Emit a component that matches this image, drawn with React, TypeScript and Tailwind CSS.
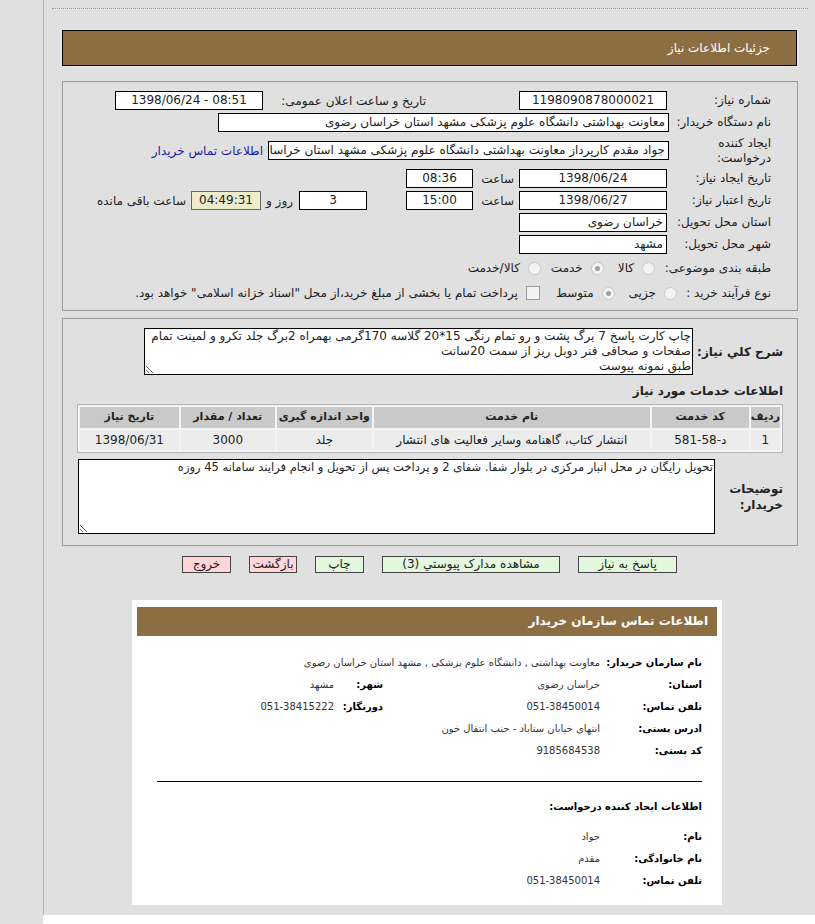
import React from 'react';

const Box: React.FC<{ className?: string; dir?: string; children?: React.ReactNode }> = ({ className = '', dir, children }) => (
  <div
    dir={dir}
    className={`h-[19px] shrink-0 border border-black bg-white px-[3px] text-[12px] leading-[17px] whitespace-nowrap overflow-hidden ${className}`}
  >
    {children}
  </div>
);

const Label: React.FC<{ children: React.ReactNode }> = ({ children }) => (
  <div className="w-[100px] shrink-0 whitespace-nowrap text-right text-[12px] leading-[15px] text-[#222]">{children}</div>
);

const Radio: React.FC<{ checked?: boolean }> = ({ checked }) => (
  <span className="inline-flex h-[13px] w-[13px] shrink-0 items-center justify-center rounded-full border border-[#c9c9c9] bg-[#f3f3f3]">
    {checked && <span className="h-[5px] w-[5px] rounded-full bg-[#a0a0a0]" />}
  </span>
);

const Btn: React.FC<{ className: string; children: React.ReactNode }> = ({ className, children }) => (
  <div className={`h-[17px] border border-[#444] text-center text-[12px] leading-[15px] text-[#222] ${className}`}>{children}</div>
);

const services = [
  { row: '1', code: 'د-58-581', name: 'انتشار کتاب، گاهنامه وسایر فعالیت های انتشار', unit: 'جلد', qty: '3000', date: '1398/06/31' },
];

export default function App() {
  return (
    <div dir="rtl" className="flex min-h-[924px] bg-white font-['DejaVu_Sans',sans-serif] text-[#222]">
      <div className="flex-1 flex flex-col">
        <div className="bg-[#e0e0e0] border-l border-[#b5b5b5] pb-[10px] pt-[8px]">
          {/* dotted rule */}
          <div className="mr-[7px] ml-[8px] border-t border-dotted border-[#9a9a9a]" />

          {/* header */}
          <div className="mx-[18px] mt-[21px] h-[36px] border border-black bg-[#8d6d42] pr-[26px] text-[12px] leading-[34px] text-white shadow-[0_0_3px_#f2f2f2]">
            جزئیات اطلاعات نیاز
          </div>

          {/* panel 1 */}
          <div className="ml-[18px] mr-[17px] mt-[15px] border border-[#9c9c9c] pr-[26px] pt-[9px] pb-[6px] flex flex-col gap-[3px]">
            <div className="flex items-center h-[19px]">
              <Label>شماره نیاز:</Label>
              <Box className="w-[148px] mr-[4px] text-center">1198090878000021</Box>
              <div className="w-[160px] mr-[93px] text-right text-[12px]">تاریخ و ساعت اعلان عمومی:</div>
              <Box dir="ltr" className="w-[148px] mr-[3px] text-center">1398/06/24 - 08:51</Box>
            </div>
            <div className="flex items-center h-[19px]">
              <Label>نام دستگاه خریدار:</Label>
              <Box className="w-[451px] mr-[2px] text-right">معاونت بهداشتی دانشگاه علوم پزشکی مشهد استان خراسان رضوی</Box>
            </div>
            <div className="flex items-center h-[31px]">
              <Label>
                ایجاد کننده
                <br />
                درخواست:
              </Label>
              <Box className="w-[401px] mr-[2px] text-right">جواد مقدم کارپرداز معاونت بهداشتی دانشگاه علوم پزشکی مشهد استان خراسان رضوی</Box>
              <a className="mr-[5px] whitespace-nowrap text-[12px] text-[#1a1aa6]">اطلاعات تماس خریدار</a>
            </div>
            <div className="flex items-center h-[19px]">
              <Label>تاریخ ایجاد نیاز:</Label>
              <Box className="w-[148px] mr-[4px] text-center">1398/06/24</Box>
              <div className="w-[40px] mr-[5px] text-right text-[12px]">ساعت</div>
              <Box className="w-[67px] mr-[1px] text-center">08:36</Box>
            </div>
            <div className="flex items-center h-[19px]">
              <Label>تاریخ اعتبار نیاز:</Label>
              <Box className="w-[148px] mr-[4px] text-center">1398/06/27</Box>
              <div className="w-[40px] mr-[5px] text-right text-[12px]">ساعت</div>
              <Box className="w-[67px] mr-[1px] text-center">15:00</Box>
              <Box className="w-[68px] mr-[39px] text-center">3</Box>
              <div className="mr-[6px] text-[12px]">روز و</div>
              <Box className="w-[70px] mr-[5px] text-center !bg-[#efeccb] !border-[#666]">04:49:31</Box>
              <div className="mr-[5px] text-[12px]">ساعت باقی مانده</div>
            </div>
            <div className="flex items-center h-[19px]">
              <Label>استان محل تحویل:</Label>
              <Box className="w-[148px] mr-[4px] text-right">خراسان رضوی</Box>
            </div>
            <div className="flex items-center h-[19px]">
              <Label>شهر محل تحویل:</Label>
              <Box className="w-[148px] mr-[4px] text-right">مشهد</Box>
            </div>
            <div className="flex items-center h-[22px] text-[12px]">
              <Label>طبقه بندی موضوعی:</Label>
              <div className="mr-[16px] flex items-center gap-[8px]">
                <Radio />
                <span>کالا</span>
              </div>
              <div className="mr-[14px] flex items-center gap-[8px]">
                <Radio checked />
                <span>خدمت</span>
              </div>
              <div className="mr-[10px] flex items-center gap-[8px]">
                <Radio />
                <span>کالا/خدمت</span>
              </div>
            </div>
            <div className="flex items-center h-[22px] text-[12px]">
              <Label>نوع فرآیند خرید :</Label>
              <div className="mr-[-6px] flex items-center gap-[8px]">
                <Radio />
                <span>جزیی</span>
              </div>
              <div className="mr-[14px] flex items-center gap-[8px]">
                <Radio checked />
                <span>متوسط</span>
              </div>
              <div className="mr-[16px] flex items-center gap-[8px]">
                <span className="h-[14px] w-[14px] border border-[#9c9c9c] bg-[#f2f2f2]" />
                <span>پرداخت تمام یا بخشی از مبلغ خرید،از محل "اسناد خزانه اسلامی" خواهد بود.</span>
              </div>
            </div>
          </div>

          {/* panel 2 */}
          <div className="ml-[18px] mr-[17px] mt-[7px] border border-[#9c9c9c] pr-[14px] pl-[14px] pt-[9px] pb-[11px]">
            <div className="flex items-center">
              <div className="w-[86px] shrink-0 whitespace-nowrap text-right text-[12px] font-bold">شرح کلي نياز:</div>
              <textarea
                readOnly
                dir="rtl"
                className="mr-[4px] h-[47px] w-[549px] border border-black bg-white px-[1px] text-[12px] leading-[15px] overflow-hidden"
                defaultValue={'چاپ کارت پاسخ 7 برگ پشت و رو تمام رنگی 15*20 گلاسه 170گرمی بهمراه 2برگ جلد تکرو و لمینت تمام\nصفحات و صحافی فنر دوبل ریز از سمت 20سانت\nطبق نمونه پیوست'}
              />
            </div>
            <div className="mt-[8px] text-right text-[12px] font-bold leading-[16px]">اطلاعات خدمات مورد نیاز</div>
            <table className="mt-[5px] w-full border border-[#b4b4b4] bg-[#f4f4f4] border-separate border-spacing-[2px] text-[11px]">
              <thead>
                <tr className="h-[21px] bg-[#c9c9c9] whitespace-nowrap">
                  <th className="w-[26px] font-bold">ردیف</th>
                  <th className="w-[97px] font-bold">کد خدمت</th>
                  <th className="w-[276px] font-bold">نام خدمت</th>
                  <th className="w-[95px] font-bold">واحد اندازه گیری</th>
                  <th className="w-[94px] font-bold">تعداد / مقدار</th>
                  <th className="font-bold">تاریخ نیاز</th>
                </tr>
              </thead>
              <tbody>
                {services.map((s) => (
                  <tr key={s.row} className="h-[20px] bg-[#ececec] text-center text-[12px]">
                    <td>{s.row}</td>
                    <td>
                      <span dir="ltr">{s.code}</span>
                    </td>
                    <td>{s.name}</td>
                    <td>{s.unit}</td>
                    <td>{s.qty}</td>
                    <td>{s.date}</td>
                  </tr>
                ))}
              </tbody>
            </table>
            <div className="mt-[6px] flex items-center">
              <div className="w-[68px] shrink-0 text-right text-[12px] font-bold leading-[16px]">
                توضیحات
                <br />
                خریدار:
              </div>
              <textarea
                readOnly
                dir="rtl"
                className="h-[75px] w-[637px] border border-black bg-white px-[1px] text-[11.5px] leading-[15px]"
                defaultValue="تحویل رایگان در محل انبار مرکزی در بلوار شفا. شفای 2 و پرداخت پس از تحویل و انجام فرایند سامانه 45 روزه"
              />
            </div>
          </div>

          {/* buttons */}
          <div className="mt-[10px] flex justify-center gap-[18px]">
            <Btn className="w-[99px] bg-[#e2f7dc]">پاسخ به نیاز</Btn>
            <Btn className="w-[178px] bg-[#e2f7dc]">مشاهده مدارک پیوستي (3)</Btn>
            <Btn className="w-[49px] bg-[#e2f7dc]">چاپ</Btn>
            <Btn className="w-[48px] bg-[#ffd6d6]">بازگشت</Btn>
            <Btn className="w-[49px] bg-[#ffd6d6]">خروج</Btn>
          </div>

          {/* buyer contact card */}
          <div className="mr-[93px] mt-[27px] w-[590px] bg-white px-[5px] pt-[7px] pb-[14px]">
            <div className="h-[29px] bg-[#8d6d42] pr-[9px] text-[12px] font-bold leading-[29px] text-white">
              اطلاعات تماس سازمان خریدار
            </div>
            <div className="mt-[15px] pr-[15px] text-[10px] text-[#333]">
              <div className="grid grid-cols-[102px_217px_49px_1fr] auto-rows-[22px] items-center whitespace-nowrap">
                <div className="font-bold text-[10px] text-black">نام سازمان خریدار:</div>
                <div className="col-span-3">معاونت بهداشتی , دانشگاه علوم پزشکی , مشهد استان خراسان رضوی</div>
                <div className="font-bold text-[10px] text-black">استان:</div>
                <div>خراسان رضوی</div>
                <div className="font-bold text-[10px] text-black">شهر:</div>
                <div>مشهد</div>
                <div className="font-bold text-[10px] text-black">تلفن تماس:</div>
                <div>051-38450014</div>
                <div className="font-bold text-[10px] text-black">دورنگار:</div>
                <div>051-38415222</div>
                <div className="font-bold text-[10px] text-black">ادرس پستی:</div>
                <div className="col-span-3">انتهای خیابان ستاباد - جنب انتقال خون</div>
                <div className="font-bold text-[10px] text-black">کد پستی:</div>
                <div className="col-span-3">9185684538</div>
              </div>
              <div className="ml-[20px] mt-[20px] border-t border-black" />
              <div className="mt-[14px] h-[22px] font-bold text-[10px] leading-[22px] text-black">اطلاعات ایجاد کننده درخواست:</div>
              <div className="mt-[7px] grid grid-cols-[102px_1fr] auto-rows-[22px] items-center whitespace-nowrap">
                <div className="font-bold text-[10px] text-black">نام:</div>
                <div>جواد</div>
                <div className="font-bold text-[10px] text-black">نام خانوادگی:</div>
                <div>مقدم</div>
                <div className="font-bold text-[10px] text-black">تلفن تماس:</div>
                <div>051-38450014</div>
              </div>
            </div>
          </div>
        </div>
      </div>
      <div className="w-[43px] shrink-0 bg-[#e0e0e0]" />
    </div>
  );
}
